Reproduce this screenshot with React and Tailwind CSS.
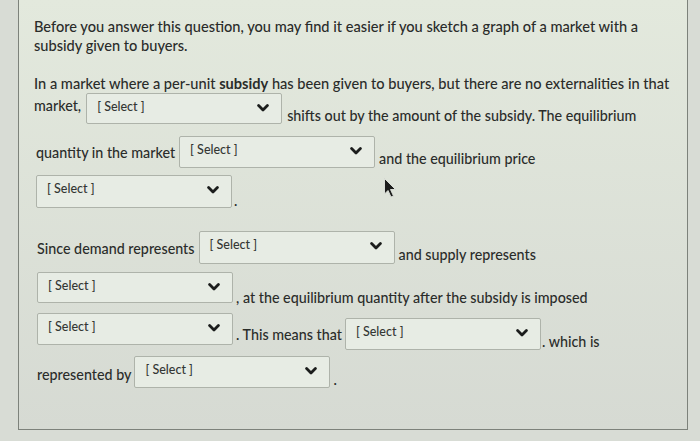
import React from "react";

function Select({ className = "" }) {
  return (
    <div
      className={`flex h-[31px] w-[196px] shrink-0 items-start justify-between rounded-[2px] border border-[#aeb3aa] bg-[#e7ece4] pl-[10px] pr-[12px] pt-[5px] ${className}`}
    >
      <span className="text-[12.5px] leading-[16px] text-[#343734]">[ Select ]</span>
      <svg width="12" height="8" viewBox="0 0 12 8" className="mt-[5px]">
        <path d="M1.6 1.6 L6 6 L10.4 1.6" fill="none" stroke="#1b1d1c" strokeWidth="2.8" strokeLinecap="round" strokeLinejoin="round" />
      </svg>
    </div>
  );
}

export default function App() {
  return (
    <div
      className="relative h-[441px] w-[700px] overflow-hidden bg-[#d8dcd5] text-[14.3px] leading-[19px] text-[#2a2c2a]"
      style={{ fontFamily: "Lato, 'Open Sans', sans-serif" }}
    >
      <div className="ml-[18px] h-[430px] w-[670px] border-b border-l border-r border-[#7d827b] bg-gradient-to-b from-[#e3e9dd] to-[#d6dad3] pl-[15px] pt-[17px] font-medium">
        {/* intro */}
        <p className="text-[14.6px]">
          Before you answer this question, you may find it easier if you sketch a graph of a market with a
          <br />
          subsidy given to buyers.
        </p>

        <p className="mt-[19px] text-[14.6px]">
          In a market where a per-unit <span className="font-bold">subsidy</span> has been given to buyers, but
          there are no externalities in that
        </p>

        <div className="flex h-[30px] items-start">
          <span className="mt-[3px]">market,</span>
          <Select className="ml-[5px] h-[30px]" />
          <span className="ml-[5px] mt-[13px]">shifts out by the amount of the subsidy. The equilibrium</span>
        </div>

        <div className="mt-[13px] flex h-[32px] items-start pl-[2px]">
          <span className="mt-[7px]">quantity in the market</span>
          <Select className="ml-[4px] h-[32px]" />
          <span className="ml-[4px] mt-[13px]">and the equilibrium price</span>
        </div>

        <div className="mt-[7px] flex h-[33px] items-start pl-[2px]">
          <Select className="h-[33px]" />
          <span className="ml-[2px] mt-[16px]">.</span>
        </div>

        <div className="mt-[23px] flex h-[33px] items-start pl-[3px]">
          <span className="mt-[8px]">Since demand represents</span>
          <Select className="ml-[4px] h-[33px] w-[193px]" />
          <span className="ml-[4px] mt-[14px]">and supply represents</span>
        </div>

        <div className="mt-[8px] flex h-[31px] items-start pl-[3px]">
          <Select className="h-[31px]" />
          <span className="ml-[3px] mt-[16px]">, at the equilibrium quantity after the subsidy is imposed</span>
        </div>

        <div className="mt-[10px] flex h-[32px] items-start pl-[3px]">
          <Select className="h-[32px]" />
          <span className="ml-[3px] mt-[12px]">. This means that</span>
          <Select className="ml-[3px] mt-[5px] h-[32px]" />
          <span className="ml-[1px] mt-[19px]">. which is</span>
        </div>

        <div className="mt-[11px] flex h-[32px] items-start pl-[3px]">
          <span className="mt-[9px]">represented by</span>
          <Select className="ml-[3px] h-[32px] w-[191px]" />
          <span className="ml-[3px] mt-[14px]">.</span>
        </div>
      </div>

      {/* mouse pointer */}
      <svg className="absolute left-[383px] top-[177px]" width="14" height="22" viewBox="0 0 14 22">
        <path d="M1.5 1.5 L1.5 17 L5 13.5 L8 20 L10.5 19 L7.5 12.5 L12.5 12.5 Z" fill="#1c1d1c" stroke="#d9ddd6" strokeWidth="1" />
      </svg>
    </div>
  );
}
